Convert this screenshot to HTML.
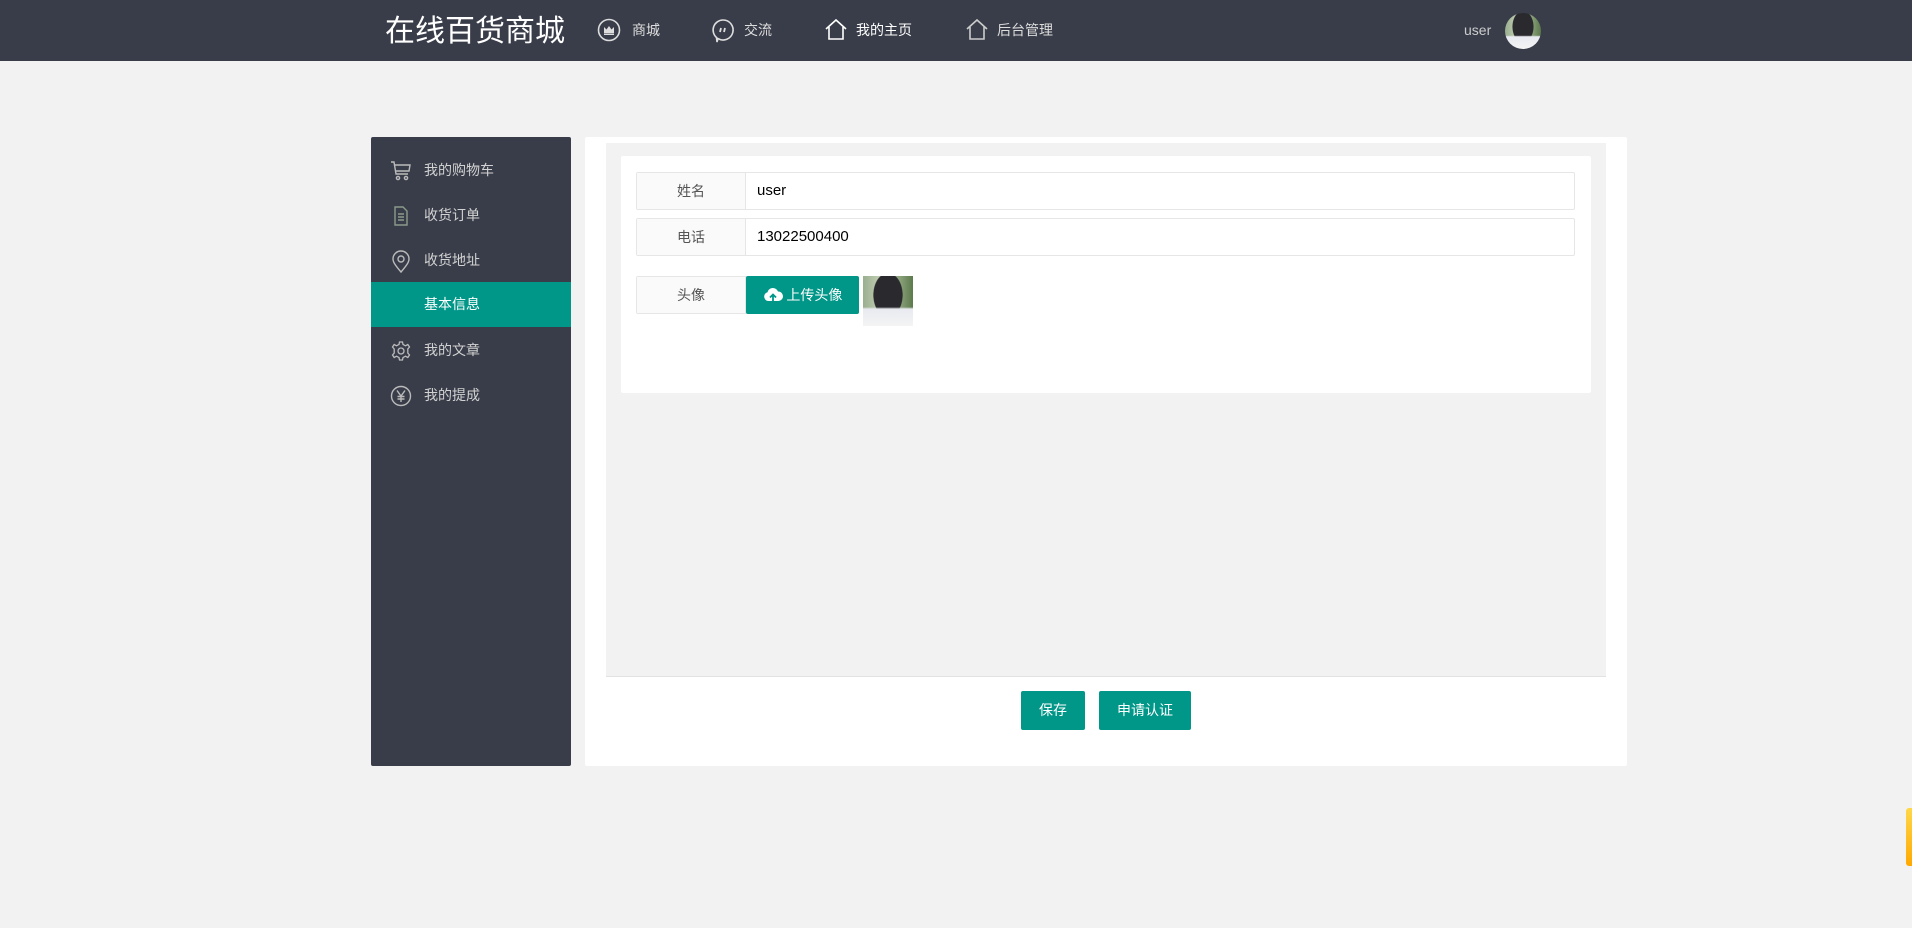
<!DOCTYPE html>
<html><head><meta charset="utf-8"><style>
*{margin:0;padding:0;box-sizing:border-box}
body{width:1912px;height:928px;background:#f2f2f2;font-family:"Liberation Sans","Noto Sans CJK SC",sans-serif;position:relative;overflow:hidden}
.hd{position:absolute;left:0;top:0;width:1912px;height:61px;background:#393d49}
.title{position:absolute;left:385px;top:12px;font-size:30px;color:#fff;line-height:40px;white-space:nowrap}
.nav{position:absolute;top:0;height:61px;line-height:61px;font-size:14px;color:#ddd}
.nav svg{position:absolute;top:18px}
.abs{position:absolute}
.side{position:absolute;left:371px;top:137px;width:200px;height:629px;background:#393d49;border-radius:2px}
.mi{position:absolute;left:0;width:200px;height:45px;line-height:45px;font-size:14px;color:#d2d2d2}
.mi span{position:absolute;left:53px}
.mi svg{position:absolute;left:19px;top:12px}
.mi.on{background:#009688;color:#fff}
.main{position:absolute;left:585px;top:137px;width:1042px;height:629px;background:#fff;border-radius:2px}
.gray{position:absolute;left:21px;top:6px;width:1000px;height:534px;background:#f2f2f2;border-bottom:1px solid #e2e2e2}
.card{position:absolute;left:15px;top:13px;width:970px;height:237px;background:#fff;border-radius:2px}
.row{position:absolute;left:15px;width:939px;height:38px;border:1px solid #e6e6e6;border-radius:2px;background:#fff}
.lab{position:absolute;left:0;top:0;width:109px;height:36px;background:#fafafa;border-right:1px solid #e6e6e6;text-align:center;line-height:36px;font-size:14px;color:#555}
.val{position:absolute;left:120px;top:0;line-height:36px;font-size:15px;color:#000}
.btn{position:absolute;background:#009688;color:#fff;font-size:14px;text-align:center;line-height:39px;height:39px;border-radius:2px}
.photo{background:linear-gradient(180deg,rgba(0,0,0,0) 62%,#e8eaf0 66%,#f4f4f4 100%),radial-gradient(ellipse 30% 45% at 50% 38%,#2a2a2e 0,#2a2a2e 95%,rgba(0,0,0,0) 100%),linear-gradient(90deg,#9aae90,#c8d4b8 40%,#5c7a4c)}
</style></head><body>
<div class="hd">
<div class="title">在线百货商城</div>
<div class="nav" style="left:597px"><svg width="24" height="24" viewBox="0 0 24 24"><circle cx="12" cy="12" r="10.5" fill="none" stroke="#ddd" stroke-width="1.6"/><path d="M7 15 L7 9 L9.5 11.5 L12 8 L14.5 11.5 L17 9 L17 15 Z" fill="#ddd"/><rect x="7" y="15.5" width="10" height="1.5" fill="#ddd"/></svg><span style="position:absolute;left:35px;white-space:nowrap">商城</span></div>
<div class="nav" style="left:711px"><svg width="24" height="26" viewBox="0 0 24 26"><path d="M12 2a10 10 0 1 1 -5 18.6 L6 24 L5.5 19.5 A10 10 0 0 1 12 2z" fill="none" stroke="#ddd" stroke-width="1.6"/><path d="M10 10 L9 14 M14 10 L13 14" stroke="#ddd" stroke-width="1.8"/></svg><span style="position:absolute;left:33px;white-space:nowrap">交流</span></div>
<div class="nav" style="left:824px;color:#fff"><svg width="24" height="24" viewBox="0 0 24 24"><path d="M2 11 L12 2 L22 11 M5 9 V21 H19 V9" fill="none" stroke="#fff" stroke-width="1.6"/></svg><span style="position:absolute;left:32px;white-space:nowrap">我的主页</span></div>
<div class="nav" style="left:965px"><svg width="24" height="24" viewBox="0 0 24 24"><path d="M2 11 L12 2 L22 11 M5 9 V21 H19 V9" fill="none" stroke="#ccc" stroke-width="1.6"/></svg><span style="position:absolute;left:32px;white-space:nowrap">后台管理</span></div>
<div class="nav" style="left:1464px;color:#ccc">user</div>
<div class="abs photo" style="left:1505px;top:13px;width:36px;height:36px;border-radius:50%"></div>
</div>
<div class="side">
<div class="mi" style="top:11px"><svg width="22" height="22" viewBox="0 0 22 22" fill="none" stroke="#bbb" stroke-width="1.4"><path d="M1 2 H4 L6 14 H18 M5 5 H20 L19 11 H6"/><circle cx="8" cy="18" r="1.6"/><circle cx="16" cy="18" r="1.6"/></svg><span>我的购物车</span></div>
<div class="mi" style="top:56px"><svg width="22" height="22" viewBox="0 0 22 22" fill="none" stroke="#8a9a8a" stroke-width="1.4"><path d="M5 2 H13 L17 6 V20 H5 Z M8 9 H14 M8 12 H14 M8 15 H14"/></svg><span>收货订单</span></div>
<div class="mi" style="top:101px"><svg width="22" height="24" viewBox="0 0 22 24" fill="none" stroke="#bbb" stroke-width="1.4"><path d="M11 22 C5 15 3 12 3 9 A8 8 0 0 1 19 9 C19 12 17 15 11 22Z"/><circle cx="11" cy="9" r="3"/></svg><span>收货地址</span></div>
<div class="mi on" style="top:145px"><span>基本信息</span></div>
<div class="mi" style="top:191px"><svg width="22" height="22" viewBox="0 0 22 22" fill="none" stroke="#bbb" stroke-width="1.3"><path d="M9.5 2 H12.5 L13 4.5 L15.5 5.8 L17.8 4.5 L19.5 7 L17.8 9 V13 L19.5 15 L17.8 17.5 L15.5 16.2 L13 17.5 L12.5 20 H9.5 L9 17.5 L6.5 16.2 L4.2 17.5 L2.5 15 L4.2 13 V9 L2.5 7 L4.2 4.5 L6.5 5.8 L9 4.5 Z"/><circle cx="11" cy="11" r="3"/></svg><span>我的文章</span></div>
<div class="mi" style="top:236px"><svg width="22" height="22" viewBox="0 0 22 22" fill="none" stroke="#bbb" stroke-width="1.4"><circle cx="11" cy="11" r="9.5"/><path d="M7 5.5 L11 11 L15 5.5 M11 11 V17 M7.5 11.5 H14.5 M7.5 14 H14.5"/></svg><span>我的提成</span></div>
</div>
<div class="main">
<div class="gray"><div class="card">
<div class="row" style="top:16px"><div class="lab">姓名</div><div class="val">user</div></div>
<div class="row" style="top:62px"><div class="lab">电话</div><div class="val">13022500400</div></div>
<div class="row" style="top:120px;width:112px"><div class="lab">头像</div></div>
<div class="btn" style="left:125px;top:120px;width:113px;height:38px;line-height:38px;font-size:14px"><svg width="20" height="16" viewBox="0 0 20 16" style="vertical-align:-3px"><path d="M5 14 A4.5 4.5 0 0 1 4.5 5.2 A5.5 5.5 0 0 1 15 4.5 A4.5 4.5 0 0 1 15.5 14 Z" fill="#fff"/><path d="M10 15 V8 M7 10.5 L10 7.5 L13 10.5" stroke="#009688" stroke-width="1.8" fill="none"/></svg> 上传头像</div>
<div class="abs photo" style="left:242px;top:120px;width:50px;height:50px"></div>
</div></div>
<div class="btn" style="left:436px;top:554px;width:64px">保存</div>
<div class="btn" style="left:514px;top:554px;width:92px">申请认证</div>
</div>
<div class="abs" style="left:1906px;top:808px;width:6px;height:58px;background:linear-gradient(#ffd84a,#ffa800);border-radius:3px 0 0 3px"></div>
</body></html>
